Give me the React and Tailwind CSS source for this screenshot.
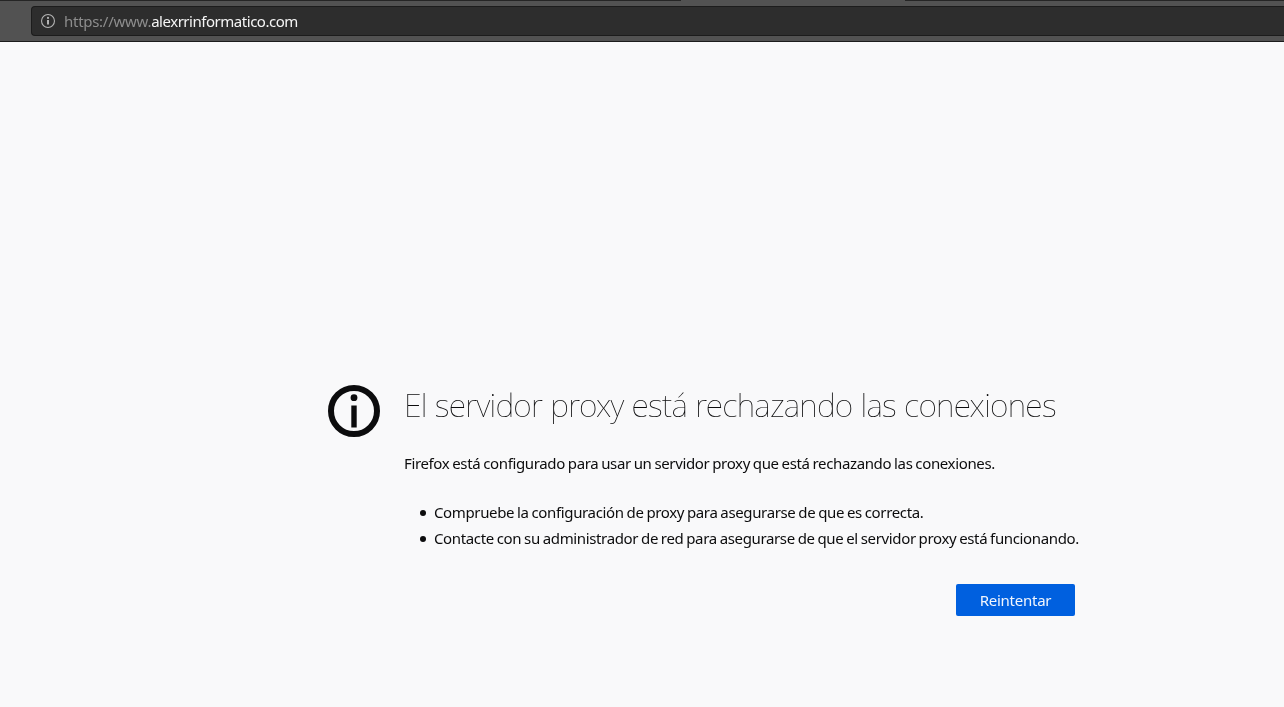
function InfoIcon({ className, ring, children }) {
  return (
    <svg viewBox="0 0 52 52" className={className} fill="none" aria-hidden="true">
      <circle cx="26" cy="26" r={26 - ring / 2} stroke="currentColor" strokeWidth={ring} />
      {children}
    </svg>
  );
}

function Toolbar() {
  return (
    <header className="flex h-[42px] flex-col border-b border-[#1c1c1c] bg-[#525252]">
      <div className="flex h-px justify-between">
        <span className="w-[681px] bg-[#252525]" />
        <span className="w-[379px] bg-[#252525]" />
      </div>
      <div className="mt-[5px] ml-[31px] flex h-[30px] items-center rounded-l-[4px] border border-r-0 border-[#1c1c1c] bg-[#2d2d2d] pl-[9px]">
        <InfoIcon className="size-[14px] shrink-0 text-[#b5b5b5]" ring={4}>
          <circle cx="26" cy="14.5" r="4" fill="currentColor" />
          <path d="M26 22v17" stroke="currentColor" strokeWidth="7.4" />
        </InfoIcon>
        <p className="ml-[9px] text-[15px] leading-[28px] whitespace-nowrap text-[#f5f5f5] will-change-transform">
          <span className="tracking-[-0.28px] text-[#8d8d8d]">https://www.</span>
          <span className="tracking-[-0.47px]">alexrrinformatico.com</span>
        </p>
      </div>
    </header>
  );
}

const tips = [
  "Compruebe la configuración de proxy para asegurarse de que es correcta.",
  "Contacte con su administrador de red para asegurarse de que el servidor proxy está funcionando.",
];

export default function App() {
  return (
    <div className="flex h-screen flex-col overflow-hidden bg-[#f9f9fa] font-['Noto_Sans',sans-serif] text-[#0c0c0d] antialiased">
      <Toolbar />
      <main className="flex gap-6 pt-[343px] pl-[328px] will-change-transform">
        <InfoIcon className="size-[52px] shrink-0" ring={6}>
          <circle cx="26" cy="12.7" r="3.4" fill="currentColor" />
          <path d="M26 20.5v22" stroke="currentColor" strokeWidth="5.4" />
        </InfoIcon>
        <div className="flex w-[671px] flex-col whitespace-nowrap">
          <h1 className="text-[32px] leading-10 font-thin tracking-[-0.74px] [word-spacing:0.5px]">
            El servidor proxy está rechazando las conexiones
          </h1>
          <p className="mt-[25px] text-[15px] leading-[26px] tracking-[-0.36px] [word-spacing:-0.65px]">
            Firefox está configurado para usar un servidor proxy que está rechazando las conexiones.
          </p>
          <ul className="mt-[23px] pl-4 text-[15px] leading-[26px] tracking-[-0.36px] [word-spacing:-0.65px]">
            {tips.map((tip) => (
              <li key={tip} className="flex items-center gap-2">
                <span className="mt-px size-[6px] shrink-0 rounded-full bg-[#0c0c0d]" />
                {tip}
              </li>
            ))}
          </ul>
          <button className="mt-[33px] h-8 w-[119px] self-end rounded-[2px] bg-[#0060df] text-[15px] leading-8 tracking-[-0.25px] text-[#f0f5fd]">
            Reintentar
          </button>
        </div>
      </main>
    </div>
  );
}
